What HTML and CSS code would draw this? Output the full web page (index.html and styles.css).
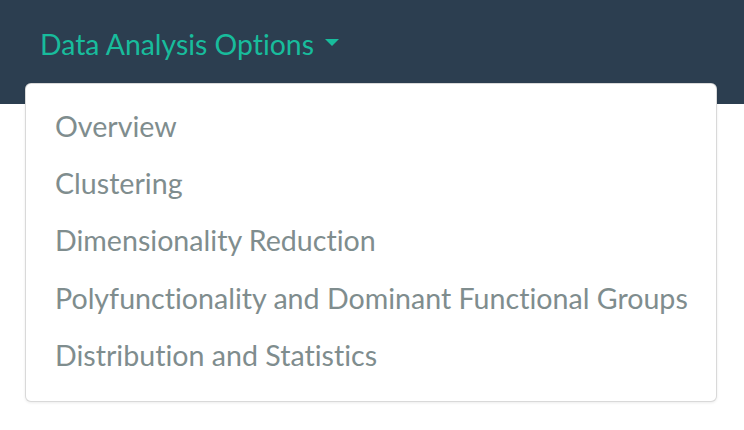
FILE: index.html
```html
<!DOCTYPE html>
<html>
<head>
<meta charset="utf-8">
<link rel="stylesheet" href="styles.css">
</head>
<body>
<div class="page">
  <nav class="topbar">
    <a class="menu-toggle" href="#">Data Analysis Options <span class="caret"></span></a>
  </nav>
  <ul class="menu-list">
    <li><a class="menu-entry" href="#">Overview</a></li>
    <li><a class="menu-entry" href="#">Clustering</a></li>
    <li><a class="menu-entry" href="#">Dimensionality Reduction</a></li>
    <li><a class="menu-entry" href="#">Polyfunctionality and Dominant Functional Groups</a></li>
    <li><a class="menu-entry" href="#">Distribution and Statistics</a></li>
  </ul>
</div>
</body>
</html>
```
FILE: styles.css
```css
html, body {
  margin: 0;
  padding: 0;
  background: #ffffff;
  font-family: Lato, "Open Sans", sans-serif;
  font-variant-ligatures: none;
}
.page {
  display: grid;
  grid-template-columns: 25px 692px 1fr;
  grid-template-rows: 83px 21px auto;
  padding-bottom: 30px;
}
.topbar {
  grid-column: 1 / 4;
  grid-row: 1 / 3;
  background: #2c3e50;
  padding: 24px 0 0 40px;
}
.menu-toggle {
  color: #18bc9c;
  text-decoration: none;
  font-size: 28.4px;
  line-height: 40px;
  display: inline-flex;
  align-items: center;
}
.caret {
  display: inline-block;
  width: 0;
  height: 0;
  margin-left: 11px;
  border-left: 7px solid transparent;
  border-right: 7px solid transparent;
  border-top: 7px solid #18bc9c;
  position: relative;
  top: -2px;
}
.menu-list {
  grid-column: 2;
  grid-row: 2 / 4;
  z-index: 1;
  margin: 0;
  padding: 14px 0 17px 0;
  list-style: none;
  background: #fff;
  border: 1px solid rgba(0,0,0,0.15);
  border-radius: 6px;
  box-shadow: 0 1px 3px rgba(0,0,0,0.08);
}
.menu-entry {
  display: block;
  color: #7f8d8e;
  text-decoration: none;
  font-size: 28.6px;
  line-height: 57.2px;
  padding-left: 29px;
  white-space: nowrap;
}
```
